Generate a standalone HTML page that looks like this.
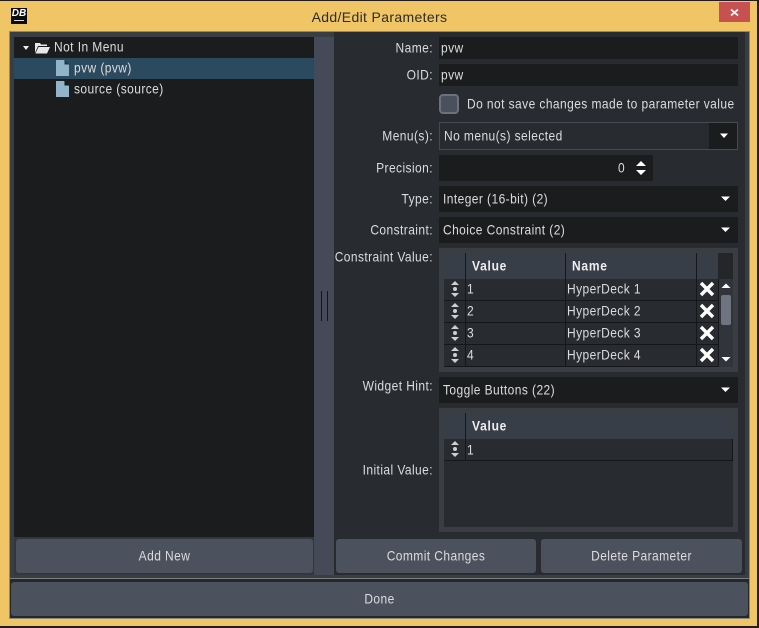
<!DOCTYPE html>
<html><head><meta charset="utf-8">
<style>
html,body{margin:0;padding:0;width:759px;height:628px;overflow:hidden;background:#241d20}
*{box-sizing:border-box}
div,svg{position:absolute}
body{font-family:"Liberation Sans",sans-serif;font-size:12px;letter-spacing:.42px;color:#dcdcdc}
.t{white-space:nowrap;line-height:16px;height:16px;transform:scaleY(1.12)}
.r{text-align:right}
.f{background:#1b1c1e}
.btn{background:#4b515d;border-radius:3px;text-align:center;color:#dcdcdc}
.btn span{display:inline-block;transform:scaleY(1.12)}
.h{font-weight:bold;color:#eee;letter-spacing:.75px}
.ln{background:#15171a}
</style></head><body>
<div style="left:0;top:1px;width:757px;height:625px;background:#efc566"></div>
<div style="left:9px;top:31px;width:741px;height:588px;background:#8d8a78"></div>
<div style="left:10px;top:32px;width:739px;height:586px;background:#393d44"></div>
<div style="left:334px;top:32px;width:411px;height:543px;background:#282b30"></div>
<div style="left:745px;top:32px;width:4px;height:547px;background:#393d44"></div>
<div style="left:14px;top:37px;width:300px;height:500px;background:#1b1c1e"></div>
<div style="left:14px;top:537px;width:300px;height:38px;background:#33373d"></div>
<div style="left:314px;top:37px;width:20px;height:538px;background:#444a57"></div>
<div style="left:321px;top:291px;width:1px;height:30px;background:#15171a"></div>
<div style="left:327px;top:291px;width:1px;height:30px;background:#15171a"></div>
<div style="left:10px;top:578px;width:739px;height:1px;background:#7b7d7c"></div>
<div style="left:10px;top:579px;width:739px;height:39px;background:#24272b"></div>

<!-- title bar -->
<div style="left:11px;top:8px;width:16px;height:16px;background:#0c0d0e"></div>
<div style="left:11px;top:7px;width:16px;height:14px;font:italic bold 10px/14px 'Liberation Sans',sans-serif;letter-spacing:0;color:#fff;text-align:center">DB</div>
<div style="left:14px;top:20px;width:10px;height:1px;background:#ddd"></div>
<div style="left:0;top:9px;width:759px;height:16px;line-height:16px;white-space:nowrap;text-align:center;color:#2f2c24;font-size:14px;letter-spacing:.35px">Add/Edit Parameters</div>
<div style="left:719px;top:2px;width:31px;height:20px;background:#c75050"></div>
<svg style="left:719px;top:2px" width="31" height="20"><path d="M12 7.500l7 6M19 7.500l-7 6" stroke="#fff" stroke-width="1.800" fill="none"/></svg>

<!-- tree -->
<div style="left:14px;top:58px;width:300px;height:21px;background:#2c4a5f"></div>
<svg style="left:22px;top:45px" width="8" height="6"><path d="M1 1h6L4 5z" fill="#eee"/></svg>
<svg style="left:34px;top:41px" width="17" height="13"><path d="M1 12V2h5l1 1.500h6V5H4L1 12z" fill="#e8e8e8"/><path d="M4.500 6H16l-3 6.500H1.500z" fill="#e8e8e8"/></svg>
<div class="t" style="left:54px;top:39px">Not In Menu</div>
<svg style="left:56px;top:60px" width="13" height="16"><path d="M0 0h8l5 5v11H0z" fill="#91b4c8"/><path d="M8.500 0L13 4.500H8.500z" fill="#1e3442"/></svg>
<div class="t" style="left:74px;top:60px">pvw (pvw)</div>
<svg style="left:56px;top:81px" width="13" height="16"><path d="M0 0h8l5 5v11H0z" fill="#91b4c8"/><path d="M8.500 0L13 4.500H8.500z" fill="#10181d"/></svg>
<div class="t" style="left:74px;top:81px">source (source)</div>

<!-- form labels -->
<div class="t r" style="left:334px;width:99px;top:40px">Name:</div>
<div class="f" style="left:439px;top:37px;width:299px;height:22px"></div>
<div class="t" style="left:441px;top:40px">pvw</div>
<div class="t r" style="left:334px;width:99px;top:67px">OID:</div>
<div class="f" style="left:439px;top:64px;width:299px;height:22px"></div>
<div class="t" style="left:441px;top:67px">pvw</div>

<div style="left:439px;top:94px;width:20px;height:20px;border:2px solid #6b717d;border-radius:4px;background:#4a505c"></div>
<div class="t" style="left:467px;top:96px">Do not save changes made to parameter value</div>

<div class="t r" style="left:334px;width:99px;top:128px">Menu(s):</div>
<div style="left:439px;top:122px;width:299px;height:28px;border:1px solid #474a50;background:#282b30"></div>
<div class="f" style="left:709px;top:123px;width:28px;height:26px"></div>
<div class="t" style="left:444px;top:128px">No menu(s) selected</div>
<svg style="left:719px;top:133px" width="10" height="6"><path d="M1 0.500h8L5 5z" fill="#fff"/></svg>

<div class="t r" style="left:334px;width:99px;top:160px">Precision:</div>
<div class="f" style="left:439px;top:155px;width:214px;height:26px"></div>
<div class="t" style="left:618px;top:160px">0</div>
<svg style="left:635px;top:160px" width="12" height="16"><path d="M1 6L6 1l5 5zM1 10l5 5 5-5z" fill="#fff"/></svg>

<div class="t r" style="left:334px;width:99px;top:191px">Type:</div>
<div class="f" style="left:439px;top:186px;width:299px;height:26px"></div>
<div class="t" style="left:443px;top:191px">Integer (16-bit) (2)</div>
<svg style="left:720px;top:196px" width="11" height="6"><path d="M1 0.500h9L5.500 5z" fill="#fff"/></svg>

<div class="t r" style="left:334px;width:99px;top:222px">Constraint:</div>
<div class="f" style="left:439px;top:217px;width:299px;height:26px"></div>
<div class="t" style="left:443px;top:222px">Choice Constraint (2)</div>
<svg style="left:720px;top:227px" width="11" height="6"><path d="M1 0.500h9L5.500 5z" fill="#fff"/></svg>

<!-- constraint table -->
<div class="t r" style="left:334px;width:99px;top:249px">Constraint Value:</div>
<div style="left:439px;top:248px;width:299px;height:124px;background:#3a3e43"></div>
<div style="left:444px;top:253px;width:289px;height:114px;background:#282b30"></div>
<div style="left:444px;top:253px;width:274px;height:26px;background:#383e48"></div>
<div style="left:718px;top:253px;width:15px;height:26px;background:#24262a"></div>
<div class="t h" style="left:472px;top:258px">Value</div>
<div class="t h" style="left:572px;top:258px">Name</div>
<div class="ln" style="left:465px;top:253px;width:1px;height:114px"></div>
<div class="ln" style="left:565px;top:253px;width:1px;height:114px"></div>
<div class="ln" style="left:696px;top:253px;width:1px;height:114px"></div>
<div class="ln" style="left:718px;top:279px;width:1px;height:88px"></div>
<div class="ln" style="left:444px;top:300px;width:274px;height:1px"></div>
<div class="ln" style="left:444px;top:322px;width:274px;height:1px"></div>
<div class="ln" style="left:444px;top:344px;width:274px;height:1px"></div>
<div class="ln" style="left:444px;top:366px;width:274px;height:1px"></div>

<div class="t" style="left:467px;top:281px">1</div><div class="t" style="left:567px;top:281px">HyperDeck 1</div>
<div class="t" style="left:467px;top:303px">2</div><div class="t" style="left:567px;top:303px">HyperDeck 2</div>
<div class="t" style="left:467px;top:325px">3</div><div class="t" style="left:567px;top:325px">HyperDeck 3</div>
<div class="t" style="left:467px;top:347px">4</div><div class="t" style="left:567px;top:347px">HyperDeck 4</div>

<svg style="left:450px;top:280px" width="10" height="88" fill="#cfcfcf"><g><path d="M1 5l4-4 4 4zM1 13h8l-4 4z"/><circle cx="5" cy="9" r="2"/></g><g transform="translate(0 22)"><path d="M1 5l4-4 4 4zM1 13h8l-4 4z"/><circle cx="5" cy="9" r="2"/></g><g transform="translate(0 44)"><path d="M1 5l4-4 4 4zM1 13h8l-4 4z"/><circle cx="5" cy="9" r="2"/></g><g transform="translate(0 66)"><path d="M1 5l4-4 4 4zM1 13h8l-4 4z"/><circle cx="5" cy="9" r="2"/></g></svg>
<svg style="left:699px;top:281px" width="16" height="84" stroke="#fff" stroke-width="3.400" fill="none"><path d="M2 2l12 12M14 2L2 14"/><path d="M2 24l12 12M14 24L2 36"/><path d="M2 46l12 12M14 46L2 58"/><path d="M2 68l12 12M14 68L2 80"/></svg>

<div style="left:719px;top:279px;width:14px;height:88px;background:#31353b"></div>
<svg style="left:720px;top:283px" width="12" height="6"><path d="M1.500 5L6 .5 10.500 5z" fill="#fff"/></svg>
<svg style="left:720px;top:356px" width="12" height="6"><path d="M1.500 1L6 5.500 10.500 1z" fill="#fff"/></svg>
<div style="left:721px;top:295px;width:10px;height:30px;border-radius:2px;background:#6e7480"></div>

<div class="t r" style="left:334px;width:99px;top:378px">Widget Hint:</div>
<div class="f" style="left:439px;top:377px;width:299px;height:26px"></div>
<div class="t" style="left:443px;top:382px">Toggle Buttons (22)</div>
<svg style="left:720px;top:387px" width="11" height="6"><path d="M1 0.500h9L5.500 5z" fill="#fff"/></svg>

<!-- initial value -->
<div class="t r" style="left:334px;width:99px;top:462px">Initial Value:</div>
<div style="left:439px;top:408px;width:299px;height:124px;background:#3a3e43"></div>
<div style="left:444px;top:413px;width:289px;height:114px;background:#282b30"></div>
<div style="left:444px;top:413px;width:289px;height:26px;background:#383e48"></div>
<div class="t h" style="left:472px;top:418px">Value</div>
<div class="ln" style="left:465px;top:413px;width:1px;height:47px"></div>
<div class="ln" style="left:732px;top:439px;width:1px;height:21px"></div>
<div class="ln" style="left:444px;top:460px;width:289px;height:1px"></div>
<div class="t" style="left:467px;top:442px">1</div>
<svg style="left:450px;top:440px" width="10" height="20" fill="#cfcfcf"><path d="M1 5l4-4 4 4zM1 13h8l-4 4z"/><circle cx="5" cy="9" r="2"/></svg>

<!-- buttons -->
<div style="left:334px;top:537px;width:411px;height:38px;background:#282b30"></div>
<div class="btn" style="left:16px;top:539px;width:297px;height:34px;line-height:34px"><span>Add New</span></div>
<div class="btn" style="left:336px;top:539px;width:200px;height:34px;line-height:34px"><span>Commit Changes</span></div>
<div class="btn" style="left:541px;top:539px;width:201px;height:34px;line-height:34px"><span>Delete Parameter</span></div>
<div class="btn" style="left:11px;top:582px;width:737px;height:34px;line-height:34px"><span>Done</span></div>
</body></html>
